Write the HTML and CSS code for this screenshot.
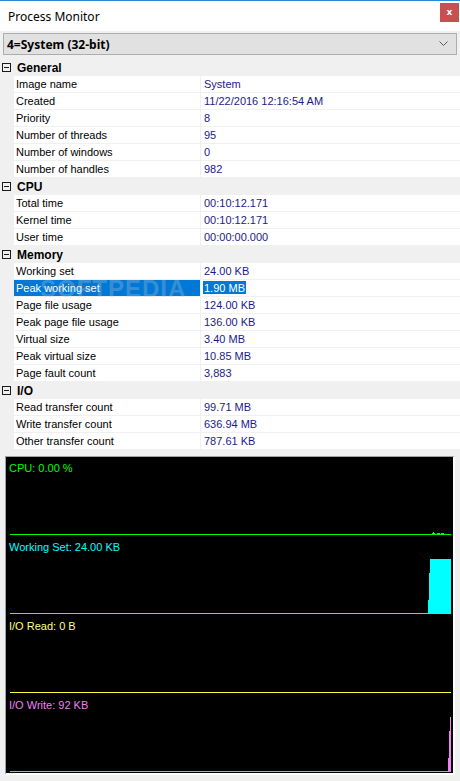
FILE: index.html
```html
<!DOCTYPE html>
<html>
<head>
<meta charset="utf-8">
<title>Process Monitor</title>
<link rel="stylesheet" href="styles.css">
</head>
<body>
<div class="window">
  <div class="topline"></div>
  <div class="titlebar">
    <span class="title">Process Monitor</span>
    <span class="close">x</span>
  </div>
  <div class="combo">
    <span class="combo-text">4=System (32-bit)</span>
    <svg class="chev" width="10" height="6" viewBox="0 0 10 6"><polyline points="0.5,0.5 4.5,4.5 8.5,0.5" fill="none" stroke="#5a5a5a" stroke-width="1"/></svg>
  </div>

  <div class="grid">
    <div class="cat"><span class="box"></span><span class="cat-name">General</span></div>
    <div class="row"><span class="label">Image name</span><span class="value">System</span></div>
    <div class="row"><span class="label">Created</span><span class="value">11/22/2016 12:16:54 AM</span></div>
    <div class="row"><span class="label">Priority</span><span class="value">8</span></div>
    <div class="row"><span class="label">Number of threads</span><span class="value">95</span></div>
    <div class="row"><span class="label">Number of windows</span><span class="value">0</span></div>
    <div class="row"><span class="label">Number of handles</span><span class="value">982</span></div>

    <div class="cat"><span class="box"></span><span class="cat-name">CPU</span></div>
    <div class="row"><span class="label">Total time</span><span class="value">00:10:12.171</span></div>
    <div class="row"><span class="label">Kernel time</span><span class="value">00:10:12.171</span></div>
    <div class="row"><span class="label">User time</span><span class="value">00:00:00.000</span></div>

    <div class="cat"><span class="box"></span><span class="cat-name">Memory</span></div>
    <div class="row"><span class="label">Working set</span><span class="value">24.00 KB</span></div>
    <div class="row selected"><span class="label">Peak working set</span><span class="value"><span class="sel">1.90 MB</span></span></div>
    <div class="row"><span class="label">Page file usage</span><span class="value">124.00 KB</span></div>
    <div class="row"><span class="label">Peak page file usage</span><span class="value">136.00 KB</span></div>
    <div class="row"><span class="label">Virtual size</span><span class="value">3.40 MB</span></div>
    <div class="row"><span class="label">Peak virtual size</span><span class="value">10.85 MB</span></div>
    <div class="row"><span class="label">Page fault count</span><span class="value">3,883</span></div>

    <div class="cat"><span class="box"></span><span class="cat-name">I/O</span></div>
    <div class="row"><span class="label">Read transfer count</span><span class="value">99.71 MB</span></div>
    <div class="row"><span class="label">Write transfer count</span><span class="value">636.94 MB</span></div>
    <div class="row"><span class="label">Other transfer count</span><span class="value">787.61 KB</span></div>

    <div class="watermark">SOFTPEDIA</div>
  </div>

  <div class="graphs">
    <div class="panel">
      <span class="glabel cpu">CPU: 0.00 %</span>
      <svg class="plot" width="447" height="79" viewBox="0 0 447 79">
        <rect x="4" y="77" width="441" height="1" fill="#00ff00"/>
        <rect x="427" y="75" width="1" height="2" fill="#00ff00"/>
        <rect x="426" y="76" width="3" height="1" fill="#00ff00"/>
        <rect x="431" y="76" width="3" height="1" fill="#00ff00"/>
        <rect x="435" y="76" width="3" height="1" fill="#00ff00"/>
      </svg>
    </div>
    <div class="panel">
      <span class="glabel ws">Working Set: 24.00 KB</span>
      <svg class="plot" width="447" height="79" viewBox="0 0 447 79">
        <rect x="4" y="77" width="441" height="1" fill="#00ffff"/>
        <rect x="424" y="23" width="21" height="55" fill="#00ffff"/>
        <rect x="423" y="37" width="1" height="41" fill="#00ffff"/>
        <rect x="422" y="64" width="1" height="14" fill="#00ffff"/>
      </svg>
    </div>
    <div class="panel">
      <span class="glabel ior">I/O Read: 0 B</span>
      <svg class="plot" width="447" height="79" viewBox="0 0 447 79">
        <rect x="4" y="77" width="441" height="1" fill="#ffff40"/>
      </svg>
    </div>
    <div class="panel">
      <span class="glabel iow">I/O Write: 92 KB</span>
      <svg class="plot" width="447" height="79" viewBox="0 0 447 79">
        <rect x="4" y="77" width="441" height="1" fill="#ee82ee"/>
        <rect x="444" y="23" width="1" height="55" fill="#ee82ee"/>
        <rect x="443" y="37" width="1" height="41" fill="#ee82ee"/>
        <rect x="442" y="64" width="1" height="14" fill="#ee82ee"/>
      </svg>
    </div>
  </div>
</div>
</body>
</html>
```

FILE: styles.css
```css
html, body {
  margin: 0;
  padding: 0;
}
body {
  width: 460px;
  height: 781px;
  overflow: hidden;
  background: #f0f0f0;
  font-family: "Liberation Sans", Arial, sans-serif;
}
.window {
  width: 460px;
  height: 781px;
  display: flex;
  flex-direction: column;
}
.topline {
  height: 1px;
  background: #2b88d8;
}
.titlebar {
  height: 30px;
  background: #ffffff;
  display: flex;
  align-items: center;
  justify-content: space-between;
  padding-left: 8px;
}
.title {
  font-family: "Noto Sans", "Open Sans", sans-serif;
  font-size: 12px;
  color: #000;
}
.close {
  width: 19px;
  height: 19px;
  margin-right: 1px;
  margin-top: -7px;
  background: #c75050;
  color: #fff;
  font-family: "DejaVu Sans", sans-serif;
  font-weight: bold;
  font-size: 9px;
  line-height: 18px;
  text-align: center;
}
.combo {
  margin: 2px 3px 0 3px;
  height: 20px;
  border: 1px solid #adadad;
  background: #e1e1e1;
  display: flex;
  align-items: center;
  justify-content: space-between;
  padding: 0 7px 0 3px;
}
.combo-text {
  font-family: "Noto Sans", "Open Sans", sans-serif;
  font-weight: bold;
  font-size: 12px;
  color: #000;
}
.chev {
  display: block;
}
.grid {
  margin-top: 4px;
  position: relative;
  display: flex;
  flex-direction: column;
}
.cat {
  height: 17px;
  display: flex;
  align-items: center;
}
.box {
  width: 7px;
  height: 7px;
  border: 1px solid #1a1a1a;
  margin-left: 2px;
  position: relative;
}
.box::after {
  content: "";
  position: absolute;
  left: 1px;
  top: 3px;
  width: 5px;
  height: 1px;
  background: #1a1a1a;
}
.cat-name {
  margin-left: 6px;
  font-weight: bold;
  font-size: 12px;
  color: #000;
}
.row {
  height: 16px;
  margin-bottom: 1px;
  display: flex;
  padding-left: 14px;
  font-size: 11px;
  line-height: 17px;
}
.label {
  width: 184px;
  padding-left: 2px;
  background: #fff;
  color: #000;
  margin-right: 1px;
  white-space: nowrap;
}
.value {
  flex: 1;
  background: #fff;
  color: #1c1a88;
  padding-left: 3px;
  white-space: nowrap;
}
.selected .label {
  background: #0078d7;
  color: #fff;
}
.sel {
  background: #0078d7;
  color: #fff;
  padding: 1px 1px 0 1px;
  margin-left: -1px;
}
.watermark {
  position: absolute;
  left: 40px;
  top: 216px;
  font-size: 24px;
  font-weight: bold;
  letter-spacing: 1px;
  color: rgba(200, 200, 200, 0.3);
  pointer-events: none;
}
.graphs {
  margin: 6px 5px 0 5px;
  border-top: 1px solid #a0a0a0;
  border-left: 1px solid #a0a0a0;
  border-right: 2px solid #ffffff;
  border-bottom: 2px solid #ffffff;
  background: #000;
  height: 316px;
  display: flex;
  flex-direction: column;
}
.panel {
  height: 79px;
  position: relative;
}
.plot {
  display: block;
}
.glabel {
  position: absolute;
  left: 3px;
  top: 4px;
  font-size: 11px;
  line-height: 14px;
  white-space: nowrap;
}
.cpu { color: #00ff00; }
.ws { color: #00ffff; }
.ior { color: #ffff80; }
.iow { color: #ee82ee; }
```
